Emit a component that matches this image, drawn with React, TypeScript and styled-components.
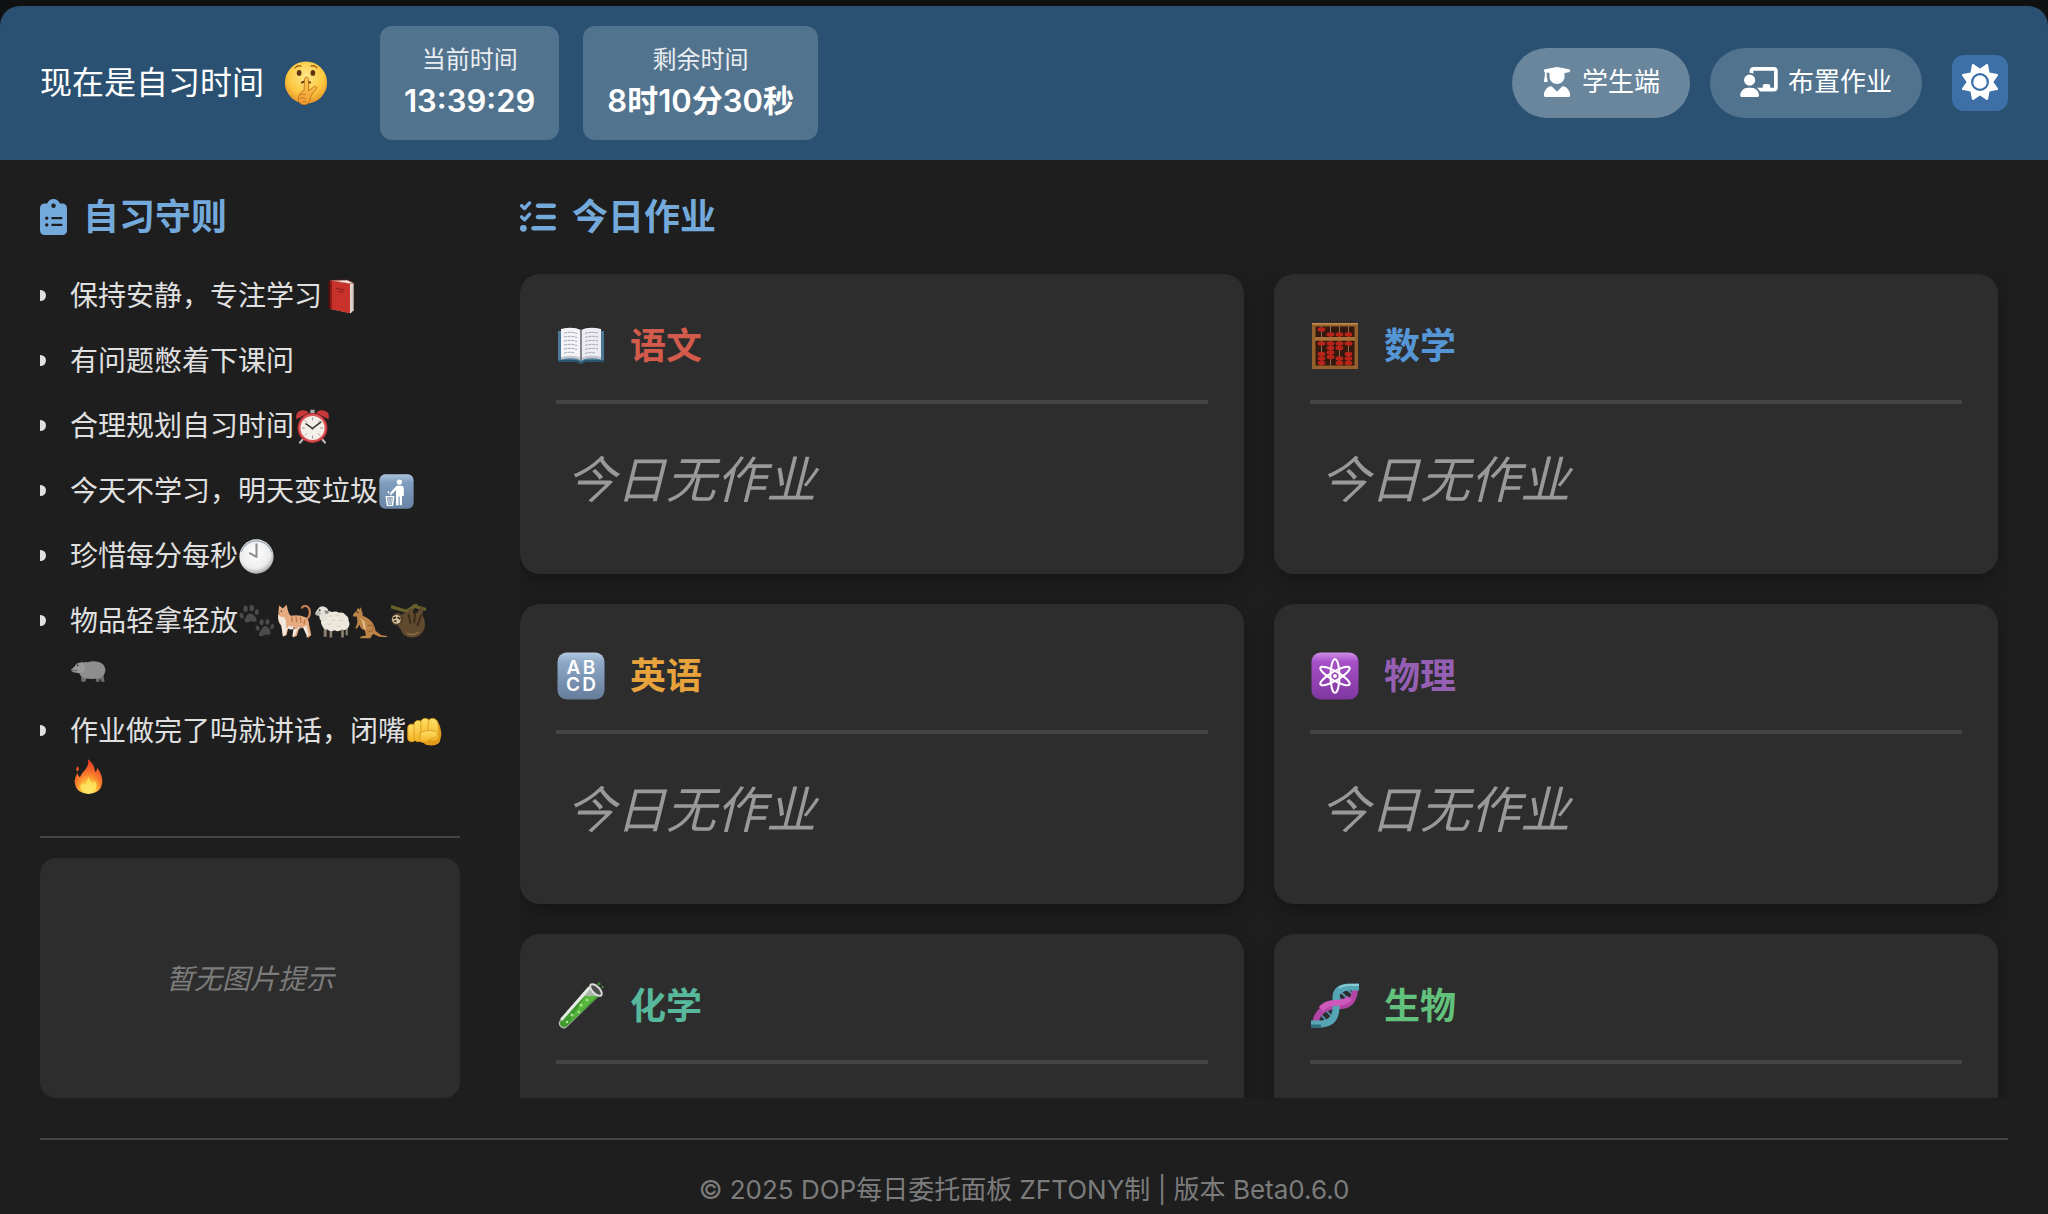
import React from "react";
import styled, { createGlobalStyle } from "styled-components";
import {
  FaChalkboardUser,
  FaClipboardList,
  FaListCheck,
  FaSun,
  FaUserGraduate,
} from "react-icons/fa6";

const GlobalStyle = createGlobalStyle`
  * { box-sizing: border-box; }
  body {
    margin: 0;
    background: #101113;
    color: #e0e0e0;
    font-family: Inter, "Noto Sans CJK SC", sans-serif;
  }
  h1, h2, h3, p, ul { margin: 0; padding: 0; }
`;

/* ---------- Emoji drawings ---------- */

const EmojiSvg = styled.svg<{ $size: number }>`
  width: ${(p) => p.$size}px;
  height: ${(p) => p.$size}px;
  flex: none;
  display: block;
`;

const drawings: Record<string, React.ReactNode> = {
  shush: (
    <>
      <defs>
        <radialGradient id="face" cx="50%" cy="35%" r="65%">
          <stop offset="0" stopColor="#ffe88a" />
          <stop offset="0.65" stopColor="#fcc83f" />
          <stop offset="1" stopColor="#e8952a" />
        </radialGradient>
        <linearGradient id="hand" x1="0" y1="0" x2="0" y2="1">
          <stop offset="0" stopColor="#ffcf5a" />
          <stop offset="1" stopColor="#ee9a2c" />
        </linearGradient>
      </defs>
      <circle cx="24" cy="23.5" r="23" fill="url(#face)" />
      <ellipse cx="16.5" cy="13" rx="2.6" ry="3.2" fill="#5e3410" />
      <ellipse cx="31.5" cy="13" rx="2.6" ry="3.2" fill="#5e3410" />
      <path d="M12 7.5q3-3 6.500-2M29.500 5.500q4-1 6.500 2" stroke="#a5651a" strokeWidth="1.500" fill="none" strokeLinecap="round" />
      <path d="M19.500 23.500q4.500-2.500 9 0" stroke="#6b3a12" strokeWidth="2.200" fill="none" strokeLinecap="round" />
      <path d="M22.500 20q0-2.500 2-2.500t2 2.500l.4 12.500 6-4.500q2-1 2.800.5.5 1-.8 2.500L30 37l-2.500 7.500q-1.500 3.500-5.500 3.300-6-.6-6.300-6.500-.2-6 6.100-9z" fill="url(#hand)" stroke="#c0701c" strokeWidth="1" />
      <path d="M17.500 37q3-2 6.500 0M17.500 41q3-2 6 0M20 44.500q2-1 4 0" stroke="#c0701c" strokeWidth="1" fill="none" />
    </>
  ),
  redbook: (
    <>
      <path d="M7 4l4-2v39l-4-1z" fill="#4a1010" />
      <path d="M11 2L36 4 42 6v37l-4 4-27-6z" fill="#e9e1da" />
      <path d="M10 2l27 4.500V47L10 41z" fill="#c8322b" />
      <path d="M10 2l2 .3V41.500L10 41z" fill="#7d1815" />
      <path d="M38.500 8v37M40.500 8v35" stroke="#b9aca5" strokeWidth=".7" />
      <path d="M10 2L33 1.500 42 5.500 37 6.500z" fill="#f3ece4" stroke="#a4302b" strokeWidth=".8" />
      <path d="M18 13l12 2M20 17l8 1.300" stroke="#7f1d18" strokeWidth="1.300" />
    </>
  ),
  alarm: (
    <>
      <path d="M12 40l-5 6M36 40l5 6" stroke="#b9b9bd" strokeWidth="3" strokeLinecap="round" />
      <path d="M21 1h6v5h-6z" fill="#a9a9ae" />
      <path d="M2 14Q0 5 7 2.500 14 0 19 5z" fill="#c9383a" />
      <path d="M46 14Q48 5 41 2.500 34 0 29 5z" fill="#c9383a" />
      <circle cx="24" cy="26" r="20.500" fill="#bf3033" />
      <circle cx="24" cy="26" r="19" fill="#d9575a" />
      <circle cx="24" cy="26" r="16.500" fill="#f4efe8" />
      <path d="M24 11.500v4M24 36.500v4M9.500 26h4M34.500 26h4M13.800 15.800l2.500 2.500M34.200 15.800l-2.500 2.500M13.800 36.200l2.500-2.500M34.200 36.200l-2.500-2.500" stroke="#9a8c86" strokeWidth="1.300" />
      <path d="M15 20.500L24 26.500 35.500 18" stroke="#333" strokeWidth="2" fill="none" strokeLinecap="round" />
      <circle cx="24" cy="26.500" r="1.800" fill="#555" />
    </>
  ),
  litter: (
    <>
      <defs>
        <linearGradient id="litterBg" x1="0" y1="0" x2="0" y2="1">
          <stop offset="0" stopColor="#a9c3dd" />
          <stop offset=".25" stopColor="#7f9dbd" />
          <stop offset="1" stopColor="#6884a6" />
        </linearGradient>
      </defs>
      <rect x=".5" y=".5" width="47" height="47" rx="8" fill="url(#litterBg)" />
      <circle cx="28" cy="11" r="3.600" fill="#fff" />
      <path d="M24 16h7q3 0 3 3.500V30h-2.500v13h-3.200V31h-1.500v12h-3.500V22l-6 6-2-2z" fill="#fff" />
      <path d="M10 31h10l-1.500 12h-7z" fill="none" stroke="#fff" strokeWidth="2" />
      <path d="M13.500 33l.5 8M16.800 33l-.5 8" stroke="#fff" strokeWidth="1.200" />
      <path d="M12 24l2 2M16 27v2" stroke="#fff" strokeWidth="2" />
    </>
  ),
  clock: (
    <>
      <defs>
        <radialGradient id="clockFace" cx="45%" cy="40%" r="60%">
          <stop offset="0" stopColor="#fff" />
          <stop offset=".75" stopColor="#ececec" />
          <stop offset="1" stopColor="#a9a9a9" />
        </radialGradient>
      </defs>
      <circle cx="24" cy="24" r="23.500" fill="url(#clockFace)" />
      <path d="M3 18A22 22 0 0 1 45 18" stroke="#9da8b4" strokeWidth="1.500" fill="none" />
      <path d="M24 6v18.500L14 19" stroke="#8d8d90" strokeWidth="2.800" fill="none" strokeLinejoin="round" />
    </>
  ),
  paws: (
    <g fill="#4b4b4b">
      <path d="M15 13q4 0 7 4t2 6q-1.500 2-5 1t-6 1q-4 1-5-1.500T9.500 18Q11.500 13 15 13z" />
      <ellipse cx="3.500" cy="16" rx="2.700" ry="4" transform="rotate(-20 3.500 16)" />
      <ellipse cx="9" cy="6.500" rx="3" ry="4.500" />
      <ellipse cx="17.500" cy="5.500" rx="3" ry="4.500" />
      <ellipse cx="24.500" cy="11" rx="2.600" ry="4" transform="rotate(15 24.500 11)" />
      <path d="M36 30q4 0 6 5t1 6q-2 2-4.500 1t-6 2q-4 1-5-1.500T30.500 36Q32.500 30 36 30z" />
      <ellipse cx="25.500" cy="33" rx="2.500" ry="3.800" transform="rotate(-20 25.500 33)" />
      <ellipse cx="31" cy="25" rx="2.700" ry="4" />
      <ellipse cx="39" cy="24.500" rx="2.700" ry="4" />
      <ellipse cx="45.500" cy="31" rx="2.400" ry="4" transform="rotate(15 45.500 31)" />
    </g>
  ),
  cat: (
    <>
      <path d="M38 22q6-2 7-9 .5-8-4.500-10-5-1-6 2" stroke="#c98256" strokeWidth="3" fill="none" strokeLinecap="round" />
      <path d="M2 10L3 2l5 4 5-5 2 8q1 5 4 7 11-2 20 2 5 3 5 10l3 15-4 3h-3l1-3-4-10-6-1-4 12-5 2v-3l2-11-8-1-3 12-5 2v-3l-2-12q-6-6-4-17z" fill="#e6ab80" />
      <path d="M2 10q-1 5 2 7l6 1q4 7 2 14l6 3 12-1q8-2 10-5l4 14-3 1-5-11-7-1-4 11-4 2 2-14-8-1-3 12-4 2-2-15q-6-6-4-19z" fill="#f2e8de" />
      <path d="M20 17l1 8M26 17l1 8M32 18l1 8M38 21l-1 7" stroke="#bf7444" strokeWidth="1.800" />
      <circle cx="6" cy="10" r="1" fill="#333" />
      <path d="M1.500 13l2 .5" stroke="#8b4b41" strokeWidth="1.500" />
    </>
  ),
  sheep: (
    <>
      <path d="M12 32v13h4V34M20 34v12h3.500V34M36 34v12h3.500V33M42 31v12h3V30" fill="#8e8173" />
      <path d="M13 12q4-4 10-1 6-2 10 1 6-1 9 3 5 3 4 8 3 6-1 10-3 4-8 2-5 4-10 1-6 3-10-1-5 0-7-5-3-4-1-9z" fill="#ece9dc" />
      <path d="M4 7q3-6 10-3 6 3 4 10l-3 9-6 1q-4-4-3-8L1 15q-2-2 3-8z" fill="#e3e2d8" />
      <path d="M5 8l-4 6 3 2 5-2z" fill="#bdbab0" />
      <circle cx="6.500" cy="8.500" r="1.200" fill="#28303a" />
      <path d="M13 9q6-1 6 2t-5 2z" fill="#8a8782" />
      <path d="M19 17q3-2 5 0M28 16q3-2 5 0M23 23q3-2 5 0M33 23q3-2 5 0M17 27q3 2 5 0M30 30q3 2 5 0" stroke="#c8c5b6" strokeWidth="1.200" fill="none" />
    </>
  ),
  kangaroo: (
    <>
      <path d="M5 9l2-4 2 3 2-4 1 6q2 3 1 6 9 3 14 10 4 6 4 11l8 6 8 1-1 1.500-10-.500-8-4-2 2-2 4h-14v-2l8-2-2-7q-6-2-7-8l-3 5-3 1 3-8q0-5-1-9l-5 0q-1-4 5-7z" fill="#bd8448" />
      <path d="M9 18q5 5 5 15l4 3-2-12z" fill="#e3bb88" />
      <path d="M20 30q6-3 9 2-1 6-8 6" stroke="#8b5a2a" strokeWidth="1.200" fill="none" />
      <circle cx="6.500" cy="11.500" r="1" fill="#222" />
    </>
  ),
  sloth: (
    <>
      <path d="M1 4l20 6 11-7 14 4M30 5l4-5" stroke="#69602a" strokeWidth="4.500" fill="none" strokeLinecap="round" />
      <path d="M10 22Q14 12 22 12l4-6 5 1-1 6 6-1 4-8 5 1-2 10q5 8 3 18-4 13-17 13-13 0-16-12-5-3-3-12z" fill="#60492e" />
      <path d="M24 14l3 14M33 12l-1 14M42 14l-6 16" stroke="#3c2c1a" strokeWidth="2.500" fill="none" />
      <circle cx="9" cy="21" r="8.500" fill="#55412b" />
      <ellipse cx="7.500" cy="21" rx="6" ry="6" fill="#d9c7a4" />
      <path d="M3 20l4-2M9 18l4 3" stroke="#3b2a1b" strokeWidth="2.500" />
      <ellipse cx="6" cy="23.500" rx="1.800" ry="1.300" fill="#251b14" />
      <path d="M22 40q8 5 16-2" stroke="#8c6c42" strokeWidth="2" fill="none" />
    </>
  ),
  hippo: (
    <>
      <path d="M14 32v13h6l1-7 13 1v6h5v-5l3 5h4l-2-14z" fill="#6e6d6d" />
      <path d="M12 22q4-5 11-4 10-3 18 1 7 4 6 12-2 8-9 9-10 2-20 0-6-2-7-9z" fill="#8f8e8e" />
      <path d="M5 24q3-6 8-5l2-2 2 3q4 5 1 10-3 4-8 3l-7-1q-4-2-2-5z" fill="#9b9999" />
      <path d="M1 29q4 2 8 0" stroke="#5c5656" strokeWidth="1.200" fill="none" />
      <circle cx="9" cy="22.500" r="1.100" fill="#222" />
      <circle cx="2.500" cy="26.500" r=".8" fill="#444" />
    </>
  ),
  fist: (
    <>
      <defs>
        <linearGradient id="fistSkin" x1="0" y1="0" x2="0" y2="1">
          <stop offset="0" stopColor="#ffe066" />
          <stop offset="1" stopColor="#f3b224" />
        </linearGradient>
      </defs>
      <path d="M30 8q9-2 13 4 4 7 4 17l-2 9q-4 6-14 5-8 0-9-6z" fill="#e39a1a" />
      <g fill="url(#fistSkin)" stroke="#d99a1d" strokeWidth="1.200">
        <rect x="1" y="14" width="11" height="24" rx="5.500" />
        <rect x="9.500" y="9" width="12" height="29" rx="5.800" />
        <rect x="19" y="6" width="12" height="29" rx="5.800" />
        <path d="M29 14q0-8 6-8 7 0 8 10l1 14q-1 7-7 7h-8z" />
        <path d="M19 25q12-4 20-1 4 2 2 6-2 4-8 4l-6 4q-8 3-10-3z" />
      </g>
    </>
  ),
  fire: (
    <>
      <defs>
        <radialGradient id="flame" cx="50%" cy="92%" r="85%">
          <stop offset="0" stopColor="#fff58c" />
          <stop offset=".3" stopColor="#ffc53a" />
          <stop offset=".6" stopColor="#f8772a" />
          <stop offset="1" stopColor="#e23c26" />
        </radialGradient>
      </defs>
      <path d="M23 0q9 6 10 18 3-2 3-6 7 9 7 19-1 16-19 17Q6 47 5 31q0-6 4-12 0 4 3 6 2-5 8-11 5-6 3-14zM9 10q4 3 0 7-4-2 0-7z" fill="url(#flame)" />
      <path d="M24 24q1 7 6 9 2-1 2-4 4 5 3 10-2 8-11 8t-11-8q0-4 3-7 1 3 3 3 4-4 5-11z" fill="#ffe45e" opacity=".85" />
    </>
  ),
  openbook: (
    <>
      <path d="M1 9h46v31H28l-4 2-4-2H1z" fill="#4c7996" />
      <path d="M1 38h19l4 2 4-2h19v2H28l-4 2-4-2H1z" fill="#2d5671" />
      <path d="M4 7q12-3 20 1v30q-8-4-20-1z" fill="#f4f4f8" />
      <path d="M44 7Q32 4 24 8v30q8-4 20-1z" fill="#ececf2" />
      <path d="M4 35q12-3 20 1 8-4 20-1v2.500q-12-3-20 1-8-4-20-1z" fill="#c3c5cd" />
      <path d="M24 8v30" stroke="#777983" strokeWidth="1.800" />
      <path d="M7 11q7-1.500 13 .5M7 15q7-1.500 13 .5M7 19q7-1.500 13 .5M7 23q7-1.500 13 .5M7 27q7-1.500 13 .5M7 31q7-1.500 10 0M28 11.500q6-2 13-.5M28 15.500q6-2 13-.5M28 19.500q6-2 13-.5M28 23.500q6-2 13-.5M28 27.500q6-2 13-.5M28 31.500q6-2 10-.5" stroke="#a3a5b1" strokeWidth="1" fill="none" strokeDasharray="3 .7" />
    </>
  ),
  abacus: (
    <>
      <rect x="1" y="1" width="46" height="46" fill="#94602b" />
      <rect x="1" y="1" width="46" height="1.500" fill="#c48c4c" />
      <path d="M4.500 4.500h39V15h-39zM4.500 18.500h39v25h-39z" fill="#35190f" />
      <path d="M10.500 4v39.500M19.500 4v39.500M28.500 4v39.500M37.500 4v39.500" stroke="#8e6a50" strokeWidth="1" />
      <path d="M4 15h40v3.500H4z" fill="#a87037" />
      <g fill="#b8231a">
        {[
          [10.5, 7.5], [19.5, 12.5], [28.5, 12.5], [37.5, 12.5],
          [10.5, 21.5], [10.5, 32], [10.5, 36.5], [10.5, 41],
          [19.5, 21.5], [19.5, 26], [19.5, 30.5], [19.5, 35],
          [28.5, 21.5], [28.5, 26], [28.5, 36.5], [28.5, 41],
          [37.5, 21.5], [37.5, 32], [37.5, 36.5], [37.5, 41],
        ].map(([x, y]) => (
          <ellipse key={`${x}-${y}`} cx={x} cy={y} rx="3.900" ry="2.200" />
        ))}
      </g>
    </>
  ),
  abcd: (
    <>
      <defs>
        <linearGradient id="abcdBg" x1="0" y1="0" x2="0" y2="1">
          <stop offset="0" stopColor="#b4cbe2" />
          <stop offset=".2" stopColor="#8ea8c6" />
          <stop offset="1" stopColor="#657c9b" />
        </linearGradient>
      </defs>
      <rect x=".5" y=".5" width="47" height="47" rx="9" fill="url(#abcdBg)" />
      <g fill="#fff" fontFamily="Inter, sans-serif" fontWeight="600" fontSize="19" textAnchor="middle">
        <text x="16.500" y="22">A</text>
        <text x="32" y="22">B</text>
        <text x="16" y="39">C</text>
        <text x="32" y="39">D</text>
      </g>
    </>
  ),
  atom: (
    <>
      <defs>
        <linearGradient id="atomBg" x1="0" y1="0" x2="0" y2="1">
          <stop offset="0" stopColor="#cf8fe6" />
          <stop offset=".2" stopColor="#a650c8" />
          <stop offset="1" stopColor="#7f369f" />
        </linearGradient>
      </defs>
      <rect x=".5" y=".5" width="47" height="47" rx="9" fill="url(#atomBg)" />
      <g fill="none" stroke="#fff" strokeWidth="2">
        <ellipse cx="24" cy="24" rx="4.500" ry="16.800" />
        <ellipse cx="24" cy="24" rx="4.500" ry="16.800" transform="rotate(60 24 24)" />
        <ellipse cx="24" cy="24" rx="4.500" ry="16.800" transform="rotate(-60 24 24)" />
      </g>
      <circle cx="24" cy="24" r="2" fill="#fff" />
    </>
  ),
  tube: (
    <>
      <path d="M33 4l10 9L10 45q-3 3-6.500 0T3 38z" fill="#a9b8aa" />
      <path d="M28 14l14 0L10 44q-3 2-5.500 0T4 38.500z" fill="#3f9a2e" />
      <path d="M28 14h12L12 41" fill="#58b83e" />
      <path d="M32 6L5 37" stroke="#e4ebe4" strokeWidth="3" strokeLinecap="round" />
      <ellipse cx="39" cy="8" rx="7.500" ry="3.500" transform="rotate(45 39 8)" fill="#4b4f4b" stroke="#d9dcd9" strokeWidth="2" />
      <g fill="#a8e588">
        <circle cx="30" cy="18" r="1.300" />
        <circle cx="24" cy="23" r="1.500" />
        <circle cx="22" cy="30" r="1.300" />
        <circle cx="15" cy="33" r="1.500" />
        <circle cx="10" cy="40" r="1.300" />
      </g>
      <circle cx="42" cy="1.800" r="1.500" fill="#3c8c34" />
      <circle cx="45.500" cy="5" r="1.200" fill="#3c8c34" />
    </>
  ),
  dna: (
    <>
      <path d="M27 7l13 13M26 13l8 9M33 5l11 9M7 29l12 14M13 26l9 10M5 35l6 8" stroke="#5793b4" strokeWidth="1.800" />
      <path d="M44 2q1 21-14 22-25-1-26 20" stroke="#b245a6" strokeWidth="6" fill="none" />
      <path d="M48 5H39Q25 5 25 16v11Q24 41 11 42H0" stroke="#55a5b5" strokeWidth="7" fill="none" />
      <path d="M10 27q5-6 14-6 10 0 15-5" stroke="#cf58bd" strokeWidth="6" fill="none" />
      <path d="M28 6q4-3 10-3h10" stroke="#85cbd4" strokeWidth="2" fill="none" />
      <path d="M0 44h10" stroke="#2d6f7f" strokeWidth="3" />
    </>
  ),
};

type EmojiProps = { name: string; label: string; size: number };

const Emoji = ({ name, label, size }: EmojiProps) => (
  <EmojiSvg $size={size} viewBox="0 0 48 48" role="img" aria-label={label}>
    {drawings[name]}
  </EmojiSvg>
);

/* ---------- Page frame ---------- */

const Frame = styled.div`
  height: 100vh;
  padding-top: 6px;
`;

const Panel = styled.div`
  height: 100%;
  display: flex;
  flex-direction: column;
  background: #1e1e1e;
  border-radius: 20px 20px 0 0;
  overflow: hidden;
`;

/* Holds a glyph whose drawing may be wider or narrower than it is tall. */
const Glyph = styled.span<{ $width: number; $height: number }>`
  display: flex;
  flex: none;
  width: ${(p) => p.$width}px;
  height: ${(p) => p.$height}px;

  svg {
    width: 100%;
    height: 100%;
  }
`;

/* ---------- Header ---------- */

const Header = styled.header`
  display: flex;
  align-items: center;
  justify-content: space-between;
  padding: 20px 40px;
  background: #2a5072;
  color: #fff;
`;

const HeaderGroup = styled.div<{ $gap: number }>`
  display: flex;
  align-items: center;
  gap: ${(p) => p.$gap}px;
`;

const StatusTitle = styled.h1`
  display: flex;
  align-items: center;
  gap: 20px;
  font-size: 32px;
  line-height: 48px;
  font-weight: 400;
`;

const TimeBox = styled.div`
  padding: 16px 24px;
  border-radius: 12px;
  background: #52738d;
  text-align: center;
`;

const TimeLabel = styled.div`
  font-size: 24px;
  line-height: 36px;
  color: #eaeef2;
`;

const TimeValue = styled.div`
  font-size: 31px;
  line-height: 46px;
  font-weight: 600;
`;

const PillButton = styled.button<{ $active?: boolean }>`
  display: flex;
  align-items: center;
  gap: 10px;
  height: 70px;
  padding: 0 30px 2px;
  border: 0;
  border-radius: 35px;
  background: ${(p) => (p.$active ? "#69869d" : "#52738d")};
  color: #fff;
  font: inherit;
  font-size: 26px;
  line-height: 36px;
  cursor: pointer;
`;

const ThemeButton = styled.button`
  display: grid;
  place-items: center;
  width: 56px;
  height: 56px;
  padding: 0 0 2px;
  border: 0;
  border-radius: 12px;
  background: #3d70a6;
  color: #fff;
  font-size: 36px;
  cursor: pointer;
`;

/* ---------- Body ---------- */

const Main = styled.main`
  flex: 1;
  min-height: 0;
  display: grid;
  grid-template-columns: 420px minmax(0, 1fr);
  gap: 60px;
  padding: 26px 40px 40px;
`;

const Column = styled.section`
  display: flex;
  flex-direction: column;
  min-height: 0;
`;

const SectionTitle = styled.h2`
  display: flex;
  align-items: center;
  gap: 16px;
  margin-bottom: 26px;
  color: #74aadb;
  font-size: 36px;
  line-height: 62px;
  font-weight: 600;
`;

const RuleList = styled.ul`
  list-style: none;
`;

const Rule = styled.li`
  display: flex;
  gap: 24px;
  margin-bottom: 20px;
  font-size: 28px;
  line-height: 45px;

  &::before {
    content: "";
    flex: none;
    width: 6px;
    height: 11px;
    margin-top: 16px;
    border-radius: 0 6px 6px 0;
    background: #e0e0e0;
  }
`;

const InlineEmoji = styled.span`
  display: inline-flex;
  align-items: center;
  width: 38px;
  height: 44px;
  padding-left: 1px;
  vertical-align: top;
`;

const HintArea = styled.div`
  margin-top: auto;
  padding-top: 20px;
  border-top: 2px solid #444;
`;

const HintBox = styled.div`
  display: grid;
  place-items: center;
  height: 240px;
  padding-bottom: 2px;
  border-radius: 16px;
  background: #2d2d2d;
  color: #7c7c7c;
  font-size: 28px;
  font-style: italic;
`;

const CardScroller = styled.div`
  flex: 1;
  min-height: 0;
  display: grid;
  grid-template-columns: repeat(2, minmax(0, 1fr));
  grid-auto-rows: max-content;
  gap: 30px;
  padding-right: 10px;
  overflow: hidden;
`;

const Card = styled.article`
  padding: 36px;
  border-radius: 20px;
  background: #2d2d2d;
  box-shadow: 0 8px 20px rgba(0, 0, 0, 0.3);
`;

const CardHeader = styled.header`
  display: flex;
  align-items: center;
  gap: 25px;
  padding: 0 1px 18px;
  border-bottom: 4px solid #444;
`;

const Subject = styled.h3<{ $color: string }>`
  color: ${(p) => p.$color};
  font-size: 36px;
  line-height: 72px;
  font-weight: 600;
`;

const Empty = styled.p`
  padding: 38px 10px 20px;
  color: #999;
  font-size: 50px;
  line-height: 76px;
  font-style: italic;
`;

const Footer = styled.footer`
  margin: 0 40px;
  padding: 30px 0 4px;
  border-top: 2px solid #444;
  color: #7c7c7c;
  font-size: 26px;
  line-height: 40px;
  text-align: center;
`;

/* ---------- Data ---------- */

type RuleItem = { text: string; emojis: [string, string][] };

const rules: RuleItem[] = [
  { text: "保持安静，专注学习", emojis: [["redbook", "📕"]] },
  { text: "有问题憋着下课问", emojis: [] },
  { text: "合理规划自习时间", emojis: [["alarm", "⏰"]] },
  { text: "今天不学习，明天变垃圾", emojis: [["litter", "🚮"]] },
  { text: "珍惜每分每秒", emojis: [["clock", "🕙"]] },
  {
    text: "物品轻拿轻放",
    emojis: [
      ["paws", "🐾"],
      ["cat", "🐈"],
      ["sheep", "🐑"],
      ["kangaroo", "🦘"],
      ["sloth", "🦥"],
      ["hippo", "🦛"],
    ],
  },
  { text: "作业做完了吗就讲话，闭嘴", emojis: [["fist", "👊"], ["fire", "🔥"]] },
];

const subjects = [
  { name: "语文", color: "#d35b4c", icon: "openbook", label: "📖" },
  { name: "数学", color: "#5596d6", icon: "abacus", label: "🧮" },
  { name: "英语", color: "#e8a33d", icon: "abcd", label: "🔠" },
  { name: "物理", color: "#9560b4", icon: "atom", label: "⚛️" },
  { name: "化学", color: "#58b89b", icon: "tube", label: "🧪" },
  { name: "生物", color: "#62c27c", icon: "dna", label: "🧬" },
];

export default function App() {
  return (
    <Frame>
      <GlobalStyle />
      <Panel>
        <Header>
          <HeaderGroup $gap={52}>
            <StatusTitle>
              现在是自习时间
              <Emoji name="shush" label="🤫" size={44} />
            </StatusTitle>
            <HeaderGroup $gap={24}>
              <TimeBox>
                <TimeLabel>当前时间</TimeLabel>
                <TimeValue>13:39:29</TimeValue>
              </TimeBox>
              <TimeBox>
                <TimeLabel>剩余时间</TimeLabel>
                <TimeValue>8时10分30秒</TimeValue>
              </TimeBox>
            </HeaderGroup>
          </HeaderGroup>
          <HeaderGroup $gap={30}>
            <HeaderGroup $gap={20}>
              <PillButton type="button" $active>
                <Glyph $width={30} $height={30}>
                  <FaUserGraduate />
                </Glyph>
                学生端
              </PillButton>
              <PillButton type="button">
                <Glyph $width={38} $height={30}>
                  <FaChalkboardUser />
                </Glyph>
                布置作业
              </PillButton>
            </HeaderGroup>
            <ThemeButton type="button" aria-label="切换主题">
              <FaSun />
            </ThemeButton>
          </HeaderGroup>
        </Header>

        <Main>
          <Column>
            <SectionTitle>
              <Glyph $width={27} $height={36}>
                <FaClipboardList />
              </Glyph>
              自习守则
            </SectionTitle>
            <RuleList>
              {rules.map((rule) => (
                <Rule key={rule.text}>
                  <div>
                    {rule.text}
                    {rule.emojis.map(([name, label]) => (
                      <InlineEmoji key={name}>
                        <Emoji name={name} label={label} size={35} />
                      </InlineEmoji>
                    ))}
                  </div>
                </Rule>
              ))}
            </RuleList>
            <HintArea>
              <HintBox>暂无图片提示</HintBox>
            </HintArea>
          </Column>

          <Column>
            <SectionTitle>
              <Glyph $width={36} $height={36}>
                <FaListCheck />
              </Glyph>
              今日作业
            </SectionTitle>
            <CardScroller>
              {subjects.map((subject) => (
                <Card key={subject.name}>
                  <CardHeader>
                    <Emoji name={subject.icon} label={subject.label} size={48} />
                    <Subject $color={subject.color}>{subject.name}</Subject>
                  </CardHeader>
                  <Empty>今日无作业</Empty>
                </Card>
              ))}
            </CardScroller>
          </Column>
        </Main>

        <Footer>© 2025 DOP每日委托面板 ZFTONY制 | 版本 Beta0.6.0</Footer>
      </Panel>
    </Frame>
  );
}
